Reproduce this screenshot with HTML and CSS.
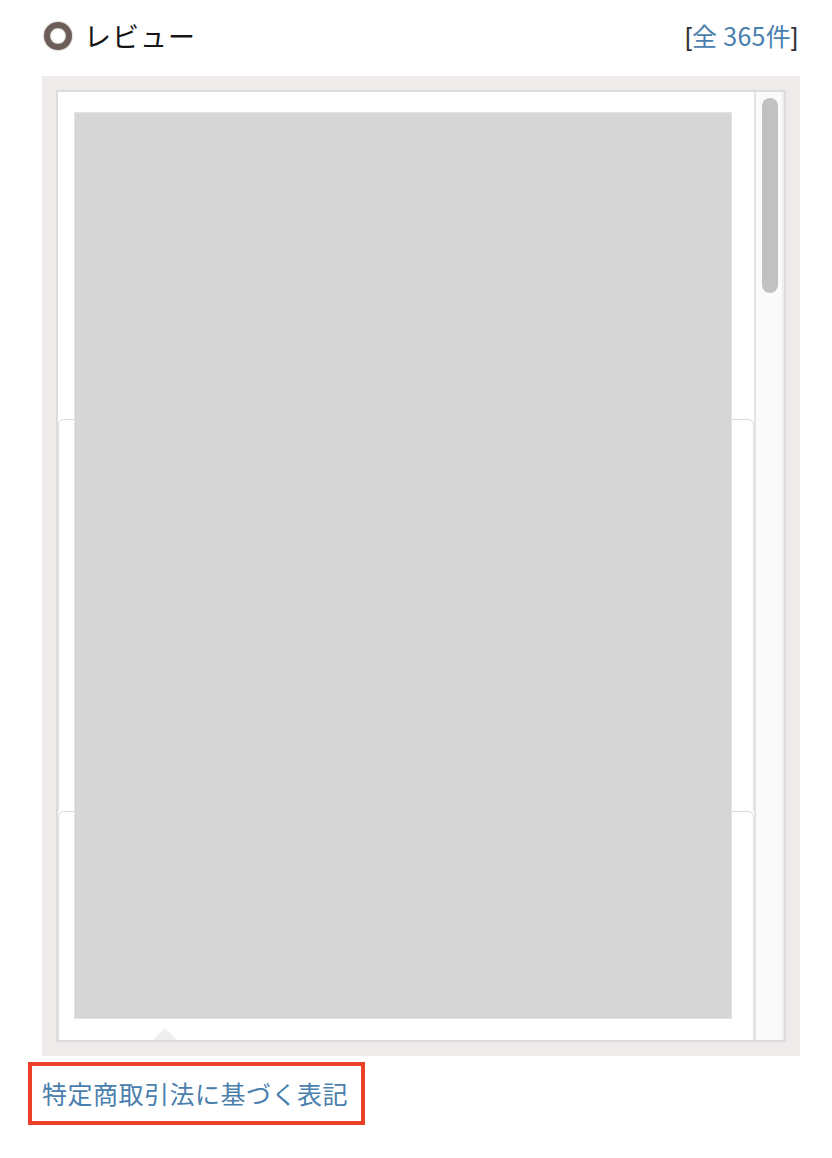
FILE: index.html
```html
<!DOCTYPE html>
<html lang="ja">
<head>
<meta charset="utf-8">
<title>レビュー</title>
<link rel="stylesheet" href="styles.css">
</head>
<body>
<div class="page">
  <div class="head">
    <h2 class="title"><span class="ring"></span>レビュー</h2>
    <span class="count">[<a href="#" class="link">全 365件</a>]</span>
  </div>
  <div class="frame">
    <div class="box">
      <div class="viewport">
        <div class="list">
          <div class="summary"></div>
          <div class="card"></div>
          <div class="card"></div>
        </div>
        <div class="placeholder"></div>
        <div class="tail"></div>
      </div>
      <div class="scrollbar"><div class="thumb"></div></div>
    </div>
  </div>
  <div class="legal"><a href="#" class="link">特定商取引法に基づく表記</a></div>
</div>
</body>
</html>
```

FILE: styles.css
```css
html, body {
  margin: 0;
  padding: 0;
  background: #ffffff;
}
body {
  font-family: "Noto Sans CJK JP", "Noto Sans", "Liberation Sans", sans-serif;
  color: #1a1a1a;
}
.page {
  width: 832px;
}
.head {
  display: flex;
  align-items: center;
  justify-content: space-between;
  height: 70px;
  margin: 0 34px 6px 42px;
}
.title {
  display: flex;
  align-items: center;
  gap: 12px;
  margin: 0;
  font-size: 27px;
  font-weight: 400;
  letter-spacing: 1px;
  color: #151515;
  padding-top: 1px;
}
.ring {
  width: 16px;
  height: 16px;
  border: 6px solid #6c5d59;
  border-radius: 50%;
  box-shadow: 0 0 1.5px #6c5d59, inset 0 0 1.5px #6c5d59;
  margin-left: 2px;
}
.count {
  font-size: 25px;
  color: #333333;
  font-family: "Liberation Sans", "Noto Sans CJK JP", sans-serif;
}
.link {
  color: #4a80ad;
  text-decoration: none;
}
.count .link {
  font-family: "Noto Sans CJK JP", sans-serif;
  letter-spacing: 0.3px;
}
.frame {
  margin-left: 42px;
  width: 758px;
  height: 980px;
  box-sizing: border-box;
  padding: 14px;
  background: #efebea;
}
.box {
  display: flex;
  height: 100%;
  box-sizing: border-box;
  border: 2px solid #dcdcdc;
  background: #ffffff;
}
.viewport {
  position: relative;
  flex: 1;
  overflow: hidden;
}
.list {
  display: flex;
  flex-direction: column;
}
.summary {
  height: 327px;
}
.card {
  height: 392px;
  box-sizing: border-box;
  border: 1px solid #e0e0e0;
  border-bottom: none;
  border-top-color: #dadada;
  border-radius: 6px 6px 0 0;
}
.placeholder {
  position: absolute;
  left: 16px;
  top: 20px;
  width: 658px;
  height: 907px;
  box-sizing: border-box;
  background: #d6d6d6;
  border: 1px solid #e2e2e2;
}
.tail {
  position: absolute;
  left: 95px;
  bottom: 0;
  width: 0;
  height: 0;
  border-left: 12px solid transparent;
  border-right: 12px solid transparent;
  border-bottom: 12px solid #efefef;
}
.scrollbar {
  width: 30px;
  box-sizing: border-box;
  border-left: 2px solid #e3e3e3;
  border-right: 2px solid #eeeeee;
  background: #fafafa;
  padding: 6px 4px 0 6px;
}
.thumb {
  width: 16px;
  height: 195px;
  border-radius: 8px;
  background: #c1c1c1;
}
.legal {
  display: inline-block;
  margin: 6px 0 0 28px;
  border: 4px solid #ea4128;
  height: 55px;
  box-sizing: content-box;
  width: 319px;
  padding-left: 10px;
  line-height: 55px;
  font-size: 25px;
  letter-spacing: 0.5px;
}
```
